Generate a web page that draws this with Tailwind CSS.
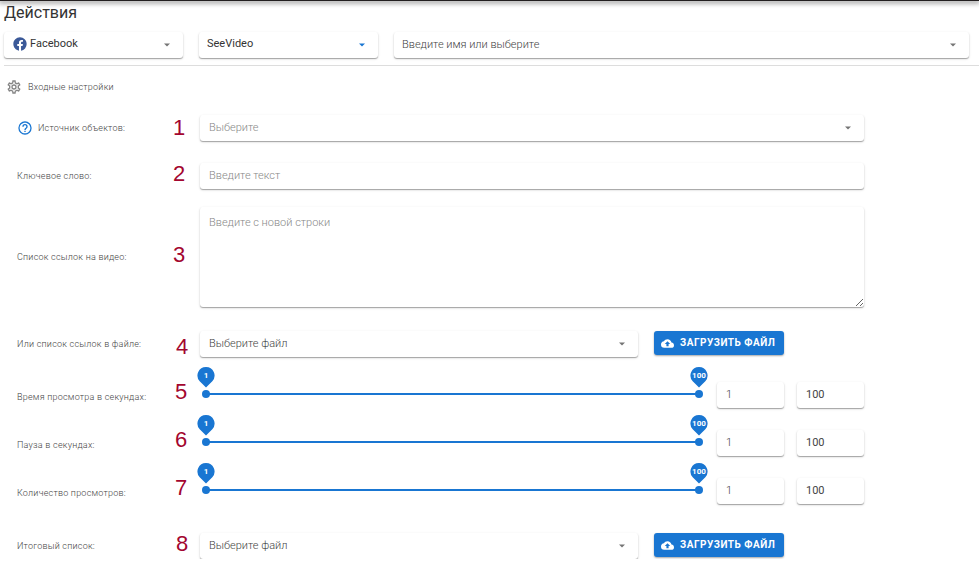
<!DOCTYPE html>
<html lang="ru">
<head>
    <meta charset="UTF-8">
    <meta name="viewport" content="width=device-width, initial-scale=1.0">
    <title>Действия</title>
    <script src="https://cdn.jsdelivr.net/npm/@tailwindcss/browser@4"></script>
</head>
<body class="bg-white font-[Roboto,sans-serif] text-[11px] leading-[14px] font-light text-[#444]">
    <!-- Shared icons -->
    <svg class="hidden">
        <symbol id="caret" viewBox="0 0 8 4"><path d="M1 0.5h6L4 3.5z" /></symbol>
        <symbol id="pin" viewBox="0 0 18 21"><path d="M9 0a8.5 8.5 0 0 1 6.3 14.2L9 20.5 2.7 14.2A8.5 8.5 0 0 1 9 0z" /></symbol>
        <symbol id="cloud" viewBox="0 0 24 24"><path d="M14,13V17H10V13H7L12,8L17,13M19.35,10.03C18.67,6.59 15.64,4 12,4C9.11,4 6.6,5.64 5.35,8.03C2.34,8.36 0,10.9 0,14A6,6 0 0,0 6,20H19A5,5 0 0,0 24,15C24,12.36 21.95,10.22 19.35,10.03Z" /></symbol>
    </svg>

    <div class="h-px bg-[#231f20] shadow-[0_1px_5px_1px_rgba(0,0,0,0.5)]"></div>
    <header class="pl-1">
        <h1 class="text-base leading-6 font-normal text-[#333]">Действия</h1>
        <div class="mt-[7px] flex gap-4 pr-[10px]">
            <div class="relative w-[179px]">
                <svg class="absolute left-2 top-1 size-4 fill-[#3b5998]" viewBox="0 0 24 24"><path d="M12 2.04C6.5 2.04 2 6.53 2 12.06C2 17.06 5.66 21.21 10.44 21.96V14.96H7.9V12.06H10.44V9.85C10.44 7.34 11.93 5.96 14.22 5.96C15.31 5.96 16.45 6.15 16.45 6.15V8.62H15.19C13.95 8.62 13.56 9.39 13.56 10.15V12.06H16.34L15.89 14.96H13.56V21.96A10 10 0 0 0 22 12.06C22 6.53 17.5 2.04 12 2.04Z" /></svg>
                <select aria-label="Платформа" class="h-[26px] w-full appearance-none rounded-[3px] pl-[26px] pr-7 pb-[2px] font-normal text-[#333] shadow-[0_1px_1px_rgba(0,0,0,0.3),0_1px_3px_rgba(0,0,0,0.12)]">
                    <option>Facebook</option>
                </select>
                <svg class="pointer-events-none absolute right-3 top-[11px] h-1 w-2 fill-[#757575]"><use href="#caret" /></svg>
            </div>
            <div class="relative w-[179px]">
                <select aria-label="Действие" class="h-[26px] w-full appearance-none rounded-[3px] pl-2 pr-7 pb-[2px] font-normal text-[#333] shadow-[0_1px_1px_rgba(0,0,0,0.3),0_1px_3px_rgba(0,0,0,0.12)]">
                    <option>SeeVideo</option>
                </select>
                <svg class="pointer-events-none absolute right-3 top-[11px] h-1 w-2 fill-[#1976d2]"><use href="#caret" /></svg>
            </div>
            <div class="relative flex-1">
                <select aria-label="Имя" class="h-[26px] w-full appearance-none rounded-[3px] pl-2 pr-7 shadow-[0_1px_1px_rgba(0,0,0,0.3),0_1px_3px_rgba(0,0,0,0.12)]">
                    <option>Введите имя или выберите</option>
                </select>
                <svg class="pointer-events-none absolute right-3 top-[11px] h-1 w-2 fill-[#757575]"><use href="#caret" /></svg>
            </div>
        </div>
        <hr class="mt-[7px] border-[#ddd]">
    </header>

    <main>
        <h2 class="mt-[13px] flex items-center gap-[6px] pl-[6px] text-[9px] tracking-wide">
            <svg class="size-4 fill-[#858585]" viewBox="0 0 24 24"><path d="M12,8A4,4 0 0,1 16,12A4,4 0 0,1 12,16A4,4 0 0,1 8,12A4,4 0 0,1 12,8M12,10A2,2 0 0,0 10,12A2,2 0 0,0 12,14A2,2 0 0,0 14,12A2,2 0 0,0 12,10M10,22C9.75,22 9.54,21.82 9.5,21.58L9.13,18.93C8.5,18.68 7.96,18.34 7.44,17.94L4.95,18.95C4.73,19.03 4.46,18.95 4.34,18.73L2.34,15.27C2.21,15.05 2.27,14.78 2.46,14.63L4.57,12.97L4.5,12L4.57,11L2.46,9.37C2.27,9.22 2.21,8.95 2.34,8.73L4.34,5.27C4.46,5.05 4.73,4.96 4.95,5.05L7.44,6.05C7.96,5.66 8.5,5.32 9.13,5.07L9.5,2.42C9.54,2.18 9.75,2 10,2H14C14.25,2 14.46,2.18 14.5,2.42L14.87,5.07C15.5,5.32 16.04,5.66 16.56,6.05L19.05,5.05C19.27,4.96 19.54,5.05 19.66,5.27L21.66,8.73C21.79,8.95 21.73,9.22 21.54,9.37L19.43,11L19.5,12L19.43,13L21.54,14.63C21.73,14.78 21.79,15.05 21.66,15.27L19.66,18.73C19.54,18.95 19.27,19.04 19.05,18.95L16.56,17.95C16.04,18.34 15.5,18.68 14.87,18.93L14.5,21.58C14.46,21.82 14.25,22 14,22H10M11.25,4L10.88,6.61C9.68,6.86 8.62,7.5 7.85,8.39L5.44,7.35L4.69,8.65L6.8,10.2C6.4,11.37 6.4,12.64 6.8,13.8L4.68,15.36L5.43,16.66L7.86,15.62C8.63,16.5 9.68,17.14 10.87,17.38L11.24,20H12.76L13.13,17.39C14.32,17.14 15.37,16.5 16.14,15.62L18.57,16.66L19.32,15.36L17.2,13.81C17.6,12.64 17.6,11.37 17.2,10.2L19.31,8.65L18.56,7.35L16.15,8.39C15.38,7.5 14.32,6.86 13.12,6.62L12.75,4H11.25Z" /></svg>
            Входные настройки
        </h2>

        <form class="mt-5 pl-[17px] pr-[115px]">
            <!-- Source -->
            <div class="flex items-center">
                <label for="source" class="flex w-[156px] items-center gap-[5px] text-[9px] tracking-wide">
                    <svg class="size-4 fill-[#1976d2]" viewBox="0 0 24 24"><path d="M11,18H13V16H11V18M12,2A10,10 0 0,0 2,12A10,10 0 0,0 12,22A10,10 0 0,0 22,12A10,10 0 0,0 12,2M12,20C7.59,20 4,16.41 4,12C4,7.59 7.59,4 12,4C16.41,4 20,7.59 20,12C20,16.41 16.41,20 12,20M12,6A4,4 0 0,0 8,10H10A2,2 0 0,1 12,8A2,2 0 0,1 14,10C14,12 11,11.75 11,15H13C13,12.75 16,12.5 16,10A4,4 0 0,0 12,6Z" /></svg>
                    Источник объектов:
                </label>
                <span class="w-[27px] font-['Liberation_Sans',sans-serif] text-[22px] leading-6 text-[#a3062f]">1</span>
                <div class="relative flex-1">
                    <select id="source" class="h-[26px] w-full appearance-none rounded-[3px] pl-[9px] pr-7 text-[#888] shadow-[0_1px_1px_rgba(0,0,0,0.3),0_1px_3px_rgba(0,0,0,0.12)]">
                        <option>Выберите</option>
                    </select>
                    <svg class="pointer-events-none absolute right-3 top-[11px] h-1 w-2 fill-[#757575]"><use href="#caret" /></svg>
                </div>
            </div>

            <!-- Keyword -->
            <div class="mt-[22px] flex items-center">
                <label for="keyword" class="w-[156px] text-[9px] tracking-wide">Ключевое слово:</label>
                <span class="w-[27px] pb-1 font-['Liberation_Sans',sans-serif] text-[22px] leading-5 text-[#a3062f]">2</span>
                <input id="keyword" type="text" placeholder="Введите текст" class="h-[26px] flex-1 rounded-[3px] px-[9px] pb-[2px] placeholder:text-[#888] shadow-[0_1px_1px_rgba(0,0,0,0.3),0_1px_3px_rgba(0,0,0,0.12)]">
            </div>

            <!-- Video links -->
            <div class="mt-[18px] flex items-center">
                <label for="links" class="w-[156px] text-[9px] tracking-wide">Список ссылок на видео:</label>
                <span class="w-[27px] pb-1 font-['Liberation_Sans',sans-serif] text-[22px] leading-5 text-[#a3062f]">3</span>
                <textarea id="links" placeholder="Введите с новой строки" class="h-[100px] flex-1 resize rounded-[3px] px-[9px] py-[9px] placeholder:text-[#888] shadow-[0_1px_1px_rgba(0,0,0,0.3),0_1px_3px_rgba(0,0,0,0.12)]"></textarea>
            </div>

            <!-- Links file -->
            <div class="mt-6 flex items-center">
                <label for="links-file" class="w-[156px] text-[9px] tracking-wide">Или список ссылок в файле:</label>
                <span class="w-[27px] pl-[3px] pt-[6px] font-['Liberation_Sans',sans-serif] text-[22px] leading-5 text-[#a3062f]">4</span>
                <div class="flex flex-1 items-start gap-4 pr-20">
                    <div class="relative flex-1">
                        <select id="links-file" class="h-[26px] w-full appearance-none rounded-[3px] pl-[9px] pr-7 shadow-[0_1px_1px_rgba(0,0,0,0.3),0_1px_3px_rgba(0,0,0,0.12)]">
                            <option>Выберите файл</option>
                        </select>
                        <svg class="pointer-events-none absolute right-3 top-[11px] h-1 w-2 fill-[#757575]"><use href="#caret" /></svg>
                    </div>
                    <button type="button" class="flex h-6 w-[130px] items-center gap-[6px] rounded-[3px] bg-[#1976d2] pl-[7px] text-[10px] font-bold tracking-wider whitespace-nowrap text-white shadow-[0_1px_2px_rgba(0,0,0,0.35)]">
                        <svg class="size-[13px] fill-white"><use href="#cloud" /></svg>
                        ЗАГРУЗИТЬ ФАЙЛ
                    </button>
                </div>
            </div>

            <!-- Watch time -->
            <div class="mt-[25px] flex items-center">
                <label for="watch-from" class="w-[156px] pt-1 text-[9px] tracking-wide">Время просмотра в секундах:</label>
                <span class="w-[27px] pb-[6px] pl-[2px] font-['Liberation_Sans',sans-serif] text-[22px] leading-5 text-[#a3062f]">5</span>
                <div class="relative mr-[14px] ml-[2px] h-6 flex-1">
                    <div class="absolute inset-x-1 top-[10px] h-[2px] bg-[#1976d2]"></div>
                    <input type="range" aria-label="Время просмотра, от" min="1" max="100" value="1" class="pointer-events-none absolute inset-x-0 top-[7px] h-2 w-full appearance-none bg-transparent [&::-webkit-slider-thumb]:pointer-events-auto [&::-webkit-slider-thumb]:size-2 [&::-webkit-slider-thumb]:appearance-none [&::-webkit-slider-thumb]:rounded-full [&::-webkit-slider-thumb]:bg-[#1976d2]">
                    <input type="range" aria-label="Время просмотра, до" min="1" max="100" value="100" class="pointer-events-none absolute inset-x-0 top-[7px] h-2 w-full appearance-none bg-transparent [&::-webkit-slider-thumb]:pointer-events-auto [&::-webkit-slider-thumb]:size-2 [&::-webkit-slider-thumb]:appearance-none [&::-webkit-slider-thumb]:rounded-full [&::-webkit-slider-thumb]:bg-[#1976d2]">
                    <div class="absolute -left-[5px] -top-4 h-[21px] w-[18px] text-center text-[8px] leading-[17px] font-bold text-white">
                        <svg class="absolute inset-0 h-[21px] w-[18px] fill-[#1976d2]"><use href="#pin" /></svg>
                        <span class="relative">1</span>
                    </div>
                    <div class="absolute -right-[5px] -top-4 h-[21px] w-[18px] text-center text-[8px] leading-[17px] font-bold text-white">
                        <svg class="absolute inset-0 h-[21px] w-[18px] fill-[#1976d2]"><use href="#pin" /></svg>
                        <span class="relative">100</span>
                    </div>
                </div>
                <input id="watch-from" type="text" value="1" class="h-[26px] w-[67px] rounded-[3px] px-[9px] pb-[2px] shadow-[0_1px_1px_rgba(0,0,0,0.3),0_1px_3px_rgba(0,0,0,0.12)]">
                <input type="text" aria-label="Время просмотра, максимум" value="100" class="ml-[13px] h-[26px] w-[67px] rounded-[3px] px-[9px] pb-[2px] font-normal shadow-[0_1px_1px_rgba(0,0,0,0.3),0_1px_3px_rgba(0,0,0,0.12)]">
            </div>

            <!-- Pause -->
            <div class="mt-[22px] flex items-center">
                <label for="pause-from" class="w-[156px] pt-1 text-[9px] tracking-wide">Пауза в секундах:</label>
                <span class="w-[27px] pb-[6px] pl-[2px] font-['Liberation_Sans',sans-serif] text-[22px] leading-5 text-[#a3062f]">6</span>
                <div class="relative mr-[14px] ml-[2px] h-6 flex-1">
                    <div class="absolute inset-x-1 top-[10px] h-[2px] bg-[#1976d2]"></div>
                    <input type="range" aria-label="Пауза, от" min="1" max="100" value="1" class="pointer-events-none absolute inset-x-0 top-[7px] h-2 w-full appearance-none bg-transparent [&::-webkit-slider-thumb]:pointer-events-auto [&::-webkit-slider-thumb]:size-2 [&::-webkit-slider-thumb]:appearance-none [&::-webkit-slider-thumb]:rounded-full [&::-webkit-slider-thumb]:bg-[#1976d2]">
                    <input type="range" aria-label="Пауза, до" min="1" max="100" value="100" class="pointer-events-none absolute inset-x-0 top-[7px] h-2 w-full appearance-none bg-transparent [&::-webkit-slider-thumb]:pointer-events-auto [&::-webkit-slider-thumb]:size-2 [&::-webkit-slider-thumb]:appearance-none [&::-webkit-slider-thumb]:rounded-full [&::-webkit-slider-thumb]:bg-[#1976d2]">
                    <div class="absolute -left-[5px] -top-4 h-[21px] w-[18px] text-center text-[8px] leading-[17px] font-bold text-white">
                        <svg class="absolute inset-0 h-[21px] w-[18px] fill-[#1976d2]"><use href="#pin" /></svg>
                        <span class="relative">1</span>
                    </div>
                    <div class="absolute -right-[5px] -top-4 h-[21px] w-[18px] text-center text-[8px] leading-[17px] font-bold text-white">
                        <svg class="absolute inset-0 h-[21px] w-[18px] fill-[#1976d2]"><use href="#pin" /></svg>
                        <span class="relative">100</span>
                    </div>
                </div>
                <input id="pause-from" type="text" value="1" class="h-[26px] w-[67px] rounded-[3px] px-[9px] pb-[2px] shadow-[0_1px_1px_rgba(0,0,0,0.3),0_1px_3px_rgba(0,0,0,0.12)]">
                <input type="text" aria-label="Пауза, максимум" value="100" class="ml-[13px] h-[26px] w-[67px] rounded-[3px] px-[9px] pb-[2px] font-normal shadow-[0_1px_1px_rgba(0,0,0,0.3),0_1px_3px_rgba(0,0,0,0.12)]">
            </div>

            <!-- Views count -->
            <div class="mt-[22px] flex items-center">
                <label for="views-from" class="w-[156px] pt-1 text-[9px] tracking-wide">Количество просмотров:</label>
                <span class="w-[27px] pb-[6px] pl-[2px] font-['Liberation_Sans',sans-serif] text-[22px] leading-5 text-[#a3062f]">7</span>
                <div class="relative mr-[14px] ml-[2px] h-6 flex-1">
                    <div class="absolute inset-x-1 top-[10px] h-[2px] bg-[#1976d2]"></div>
                    <input type="range" aria-label="Количество просмотров, от" min="1" max="100" value="1" class="pointer-events-none absolute inset-x-0 top-[7px] h-2 w-full appearance-none bg-transparent [&::-webkit-slider-thumb]:pointer-events-auto [&::-webkit-slider-thumb]:size-2 [&::-webkit-slider-thumb]:appearance-none [&::-webkit-slider-thumb]:rounded-full [&::-webkit-slider-thumb]:bg-[#1976d2]">
                    <input type="range" aria-label="Количество просмотров, до" min="1" max="100" value="100" class="pointer-events-none absolute inset-x-0 top-[7px] h-2 w-full appearance-none bg-transparent [&::-webkit-slider-thumb]:pointer-events-auto [&::-webkit-slider-thumb]:size-2 [&::-webkit-slider-thumb]:appearance-none [&::-webkit-slider-thumb]:rounded-full [&::-webkit-slider-thumb]:bg-[#1976d2]">
                    <div class="absolute -left-[5px] -top-4 h-[21px] w-[18px] text-center text-[8px] leading-[17px] font-bold text-white">
                        <svg class="absolute inset-0 h-[21px] w-[18px] fill-[#1976d2]"><use href="#pin" /></svg>
                        <span class="relative">1</span>
                    </div>
                    <div class="absolute -right-[5px] -top-4 h-[21px] w-[18px] text-center text-[8px] leading-[17px] font-bold text-white">
                        <svg class="absolute inset-0 h-[21px] w-[18px] fill-[#1976d2]"><use href="#pin" /></svg>
                        <span class="relative">100</span>
                    </div>
                </div>
                <input id="views-from" type="text" value="1" class="h-[26px] w-[67px] rounded-[3px] px-[9px] pb-[2px] shadow-[0_1px_1px_rgba(0,0,0,0.3),0_1px_3px_rgba(0,0,0,0.12)]">
                <input type="text" aria-label="Количество просмотров, максимум" value="100" class="ml-[13px] h-[26px] w-[67px] rounded-[3px] px-[9px] pb-[2px] font-normal shadow-[0_1px_1px_rgba(0,0,0,0.3),0_1px_3px_rgba(0,0,0,0.12)]">
            </div>

            <!-- Result list -->
            <div class="mt-[29px] flex items-center">
                <label for="result-file" class="w-[156px] text-[9px] tracking-wide">Итоговый список:</label>
                <span class="w-[27px] pb-1 pl-[3px] font-['Liberation_Sans',sans-serif] text-[22px] leading-5 text-[#a3062f]">8</span>
                <div class="flex flex-1 items-start gap-4 pr-20">
                    <div class="relative flex-1">
                        <select id="result-file" class="h-[26px] w-full appearance-none rounded-[3px] pl-[9px] pr-7 shadow-[0_1px_1px_rgba(0,0,0,0.3),0_1px_3px_rgba(0,0,0,0.12)]">
                            <option>Выберите файл</option>
                        </select>
                        <svg class="pointer-events-none absolute right-3 top-[11px] h-1 w-2 fill-[#757575]"><use href="#caret" /></svg>
                    </div>
                    <button type="button" class="flex h-6 w-[130px] items-center gap-[6px] rounded-[3px] bg-[#1976d2] pl-[7px] text-[10px] font-bold tracking-wider whitespace-nowrap text-white shadow-[0_1px_2px_rgba(0,0,0,0.35)]">
                        <svg class="size-[13px] fill-white"><use href="#cloud" /></svg>
                        ЗАГРУЗИТЬ ФАЙЛ
                    </button>
                </div>
            </div>
        </form>
    </main>
</body>
</html>
